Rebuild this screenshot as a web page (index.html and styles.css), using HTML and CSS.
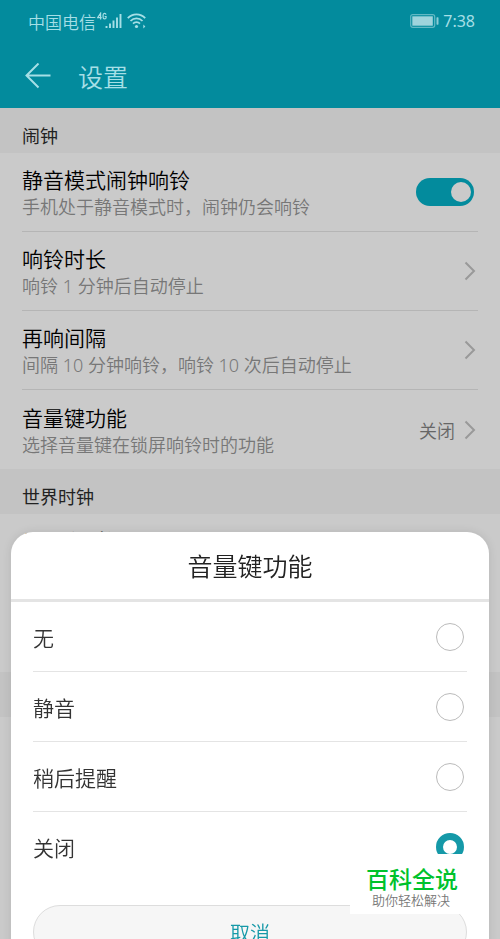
FILE: index.html
```html
<!DOCTYPE html>
<html lang="zh-CN">
<head>
<meta charset="utf-8">
<meta name="viewport" content="width=device-width, initial-scale=1">
<title>设置</title>
<link rel="stylesheet" href="styles.css">
</head>
<body>
<header class="top">
  <div class="status">
    <span class="carrier">中国电信</span>
    <svg class="signal" width="26" height="18" viewBox="0 0 26 18" fill="none" stroke="currentColor" aria-hidden="true">
      <path stroke-width="1.200" d="M3.600 7.500V1.200L.7 5.600h4M9 2.600C8.700.8 6.100.8 6.100 3v2.200c0 2.400 3 2.200 3 .2v-.9H7.600"/>
      <path stroke-width="1.900" d="M9.500 16v-2M13 16v-4.500M16.500 16V8.500M20 16V5.500M23.500 16V2"/>
    </svg>
    <svg class="wifi" width="19" height="18" viewBox="0 0 19 18" fill="none" stroke="currentColor" stroke-width="1.800" aria-hidden="true">
      <path d="M.8 6.200c4.700-5.200 12.700-5.200 17.400 0M3.500 9c3.400-3.600 8.600-3.600 12 0M6 11.700c2-2 5-2 7 0"/>
      <circle cx="9.500" cy="14.500" r="1.600" fill="currentColor" stroke="none"/>
      <path fill="currentColor" stroke="none" d="M16.300 12.500v4l2-2z"/>
    </svg>
    <svg class="battery" width="29" height="14" viewBox="0 0 29 14" fill="none" aria-hidden="true">
      <rect x=".7" y=".7" width="24" height="12.600" rx="2" stroke="#62b9c4" stroke-width="1.200"/>
      <rect x="2.300" y="2.300" width="20.500" height="9.400" fill="#9ed4dc"/>
      <rect x="26.500" y="3.300" width="2" height="7.400" rx=".6" fill="#8accd5"/>
    </svg>
    <time class="clock">7:38</time>
  </div>
  <div class="bar">
    <button class="back" type="button" aria-label="返回">
      <svg width="26" height="26" viewBox="0 0 26 26" fill="none" stroke="currentColor" stroke-width="2" aria-hidden="true"><path d="M25.500 12.500H1.500M13.500 .5 1.500 12.500l12 12"/></svg>
    </button>
    <h1 class="heading">设置</h1>
  </div>
</header>
<main>
  <h2 class="section">闹钟</h2>
  <div class="list">
    <label class="row">
      <span class="texts"><span class="name">静音模式闹钟响铃</span><span class="note">手机处于静音模式时，闹钟仍会响铃</span></span>
      <input class="switch" type="checkbox" role="switch" checked>
    </label>
    <a class="row" href="#duration">
      <span class="texts"><span class="name">响铃时长</span><span class="note">响铃 1 分钟后自动停止</span></span>
      <svg class="chevron" width="12" height="20" viewBox="0 0 12 20" aria-hidden="true"><path d="m1.500 1.500 8.500 8.500-8.500 8.500"/></svg>
    </a>
    <a class="row" href="#snooze">
      <span class="texts"><span class="name">再响间隔</span><span class="note">间隔 10 分钟响铃，响铃 10 次后自动停止</span></span>
      <svg class="chevron" width="12" height="20" viewBox="0 0 12 20" aria-hidden="true"><path d="m1.500 1.500 8.500 8.500-8.500 8.500"/></svg>
    </a>
    <a class="row" href="#volume">
      <span class="texts"><span class="name">音量键功能</span><span class="note">选择音量键在锁屏响铃时的功能</span></span>
      <span class="value">关闭</span>
      <svg class="chevron" width="12" height="20" viewBox="0 0 12 20" aria-hidden="true"><path d="m1.500 1.500 8.500 8.500-8.500 8.500"/></svg>
    </a>
  </div>
  <h2 class="section">世界时钟</h2>
  <div class="list">
    <a class="row single" href="#datetime"><span class="name">日期和时间</span></a>
    <div class="row single"></div>
  </div>
  <div class="section"></div>
</main>

<form class="dialog" role="dialog" aria-labelledby="dialog-title">
  <h2 class="dialog-title" id="dialog-title">音量键功能</h2>
  <div class="options">
    <label class="option">无<input type="radio" name="volume"></label>
    <label class="option">静音<input type="radio" name="volume"></label>
    <label class="option">稍后提醒<input type="radio" name="volume"></label>
    <label class="option">关闭<input type="radio" name="volume" checked></label>
  </div>
  <button class="cancel" type="button">取消</button>
</form>

<aside class="brand">
  <strong class="brand-name">百科全说</strong>
  <span class="brand-note">助你轻松解决</span>
</aside>
</body>
</html>
```

FILE: styles.css
```css
* {
  box-sizing: border-box;
}

body {
  margin: 0;
  min-height: 100vh;
  overflow: hidden;
  background: #cacaca;
  color: #111;
  font-family: "Noto Sans", "Noto Sans CJK SC", sans-serif;
  font-weight: 350;
}

h1,
h2 {
  margin: 0;
  font-weight: inherit;
}

.top {
  height: 108px;
  background: #038b9d;
  color: #a6dfe6;
}

.status {
  display: flex;
  align-items: center;
  height: 42px;
  padding: 0 25px 0 28px;
  font-size: 17px;
}

.signal {
  margin-left: 1px;
}

.wifi {
  margin-left: 4px;
}

.battery {
  margin-left: auto;
}

.clock {
  margin-left: 4px;
  font-size: 16px;
  font-weight: 400;
}

.bar {
  display: flex;
  align-items: center;
  gap: 27px;
  height: 68px;
  padding: 0 25px;
}

.back {
  display: flex;
  padding: 0;
  border: 0;
  background: none;
  color: inherit;
}

.heading {
  font-size: 25px;
}

.section {
  height: 45px;
  padding: 0 22px;
  background: #c3c3c3;
  color: #222;
  font-size: 18px;
  font-weight: 400;
  line-height: 56px;
}

.list {
  padding: 0 22px;
}

.row {
  display: flex;
  align-items: center;
  height: 79px;
  border-bottom: 1px solid #b5b5b5;
  color: inherit;
  text-decoration: none;
}

.row:last-child {
  border-bottom: 0;
}

.texts {
  display: flex;
  flex: 1;
  flex-direction: column;
  padding-top: 2px;
}

.name {
  color: #000;
  font-size: 21px;
  line-height: 28px;
}

.note {
  color: #777;
  font-size: 18px;
  line-height: 26px;
}

.value {
  margin-right: 9px;
  color: #666;
  font-size: 18px;
}

.single {
  padding-bottom: 24px;
}

.chevron {
  margin-right: 2px;
  fill: none;
  stroke: #999;
  stroke-width: 2;
}

.switch {
  display: flex;
  align-items: center;
  justify-content: flex-end;
  width: 58px;
  height: 28px;
  margin: 0 4px 0 0;
  padding: 0 3px;
  border-radius: 14px;
  background: #038b9d;
  appearance: none;
}

.switch::before {
  width: 20px;
  height: 20px;
  border-radius: 50%;
  background: #cacaca;
  content: "";
}

.dialog {
  position: fixed;
  top: 532px;
  right: 11px;
  left: 11px;
  padding-bottom: 22px;
  border-radius: 22px;
  background: #fff;
  box-shadow: 0 0 10px rgba(0, 0, 0, 0.1);
  color: #333;
}

.dialog-title {
  height: 70px;
  border-bottom: 3px solid #e4e4e4;
  color: #222;
  font-size: 25px;
  line-height: 68px;
  text-align: center;
}

.options {
  padding: 0 22px;
}

.option {
  display: flex;
  align-items: center;
  justify-content: space-between;
  height: 70px;
  padding-right: 3px;
  border-bottom: 1px solid #e4e4e4;
  font-size: 21px;
}

.option:last-child {
  border-bottom: 0;
}

.option input {
  width: 28px;
  height: 28px;
  margin: 0;
  border: 1px solid #bbb;
  border-radius: 50%;
  background: #fff;
  appearance: none;
}

.option input:checked {
  border: 7px solid #1599a8;
}

.cancel {
  display: block;
  width: calc(100% - 44px);
  height: 54px;
  margin: 23px 22px 0;
  border: 1px solid #ddd;
  border-radius: 27px;
  background: #f6f6f6;
  color: #1599a8;
  font: inherit;
  font-size: 20px;
}

.brand {
  position: fixed;
  top: 854px;
  right: 11px;
  display: flex;
  flex-direction: column;
  width: 139px;
  height: 60px;
  padding: 11px 0 0 16px;
  background: #fff;
}

.brand-name {
  color: #00c22c;
  font-size: 23px;
  font-weight: 500;
  line-height: 28px;
}

.brand-note {
  padding-left: 6px;
  color: #777;
  font-size: 13px;
  line-height: 14px;
}
```
